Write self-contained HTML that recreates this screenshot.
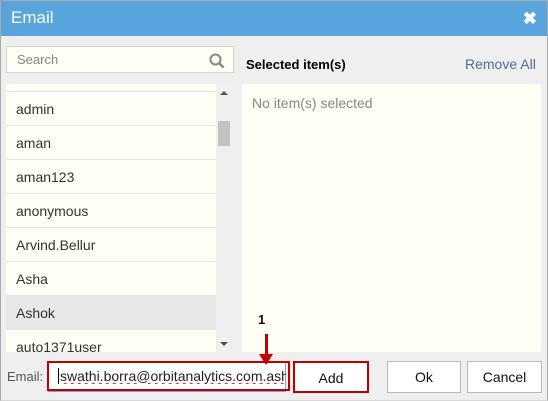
<!DOCTYPE html>
<html><head><style>
*{box-sizing:border-box;margin:0;padding:0}
body{width:548px;height:401px;overflow:hidden;background:#fff;font-family:"Liberation Sans",sans-serif;position:relative}
.dlg{position:absolute;left:0;top:0;width:548px;height:401px;background:#efefef}
.frame{position:absolute;left:0;top:0;width:548px;height:401px;border:1px solid #a9a9a9;border-bottom-color:#d8d8d8}
.title{position:absolute;left:0;top:0;width:548px;height:36px;background:#58a4dc;color:#fff;font-size:17px;padding:8px 0 0 11px}
.x{position:absolute;right:11px;top:9px;font-size:17px;font-weight:bold}
.search{position:absolute;left:6px;top:46px;width:228px;height:27px;background:#fffff5;border:1px solid #d4d4d4;color:#888;font-size:13px;padding:5px 0 0 10px}
.list{position:absolute;left:6px;top:84px;width:226px;height:268px;background:#fffff5;overflow:hidden}
.row{position:absolute;left:0;width:210px;height:34px;border-top:1px solid #e6e6e6;font-size:14px;color:#333;padding:9px 0 0 10px}
.sb{position:absolute;left:216px;top:84px;width:16px;height:268px;background:#f0f0f0}
.right{position:absolute;left:242px;top:84px;width:299px;height:268px;background:#fffff5;color:#888;font-size:14px;padding:11px 0 0 10px}
.btn{position:absolute;top:361px;height:32px;background:#fff;border:1px solid #bbb;font-size:14px;color:#111;text-align:center;line-height:30px}
</style></head><body>
<div class="dlg">
<div class="title">Email<span class="x">✖</span></div>
<div class="search">Search
<svg style="position:absolute;right:8px;top:6px" width="16" height="16" viewBox="0 0 16 16"><circle cx="6.5" cy="6.5" r="5" fill="none" stroke="#888" stroke-width="2"/><path d="M10 10l4.5 4.5" stroke="#888" stroke-width="2.5"/></svg></div>
<div class="list">
<div class="row" style="top:7px">admin</div>
<div class="row" style="top:41px">aman</div>
<div class="row" style="top:75px">aman123</div>
<div class="row" style="top:109px">anonymous</div>
<div class="row" style="top:143px">Arvind.Bellur</div>
<div class="row" style="top:177px">Asha</div>
<div class="row" style="top:211px;background:#e8e8e8">Ashok</div>
<div class="row" style="top:245px">auto1371user</div>
</div>
<div class="sb"><div style="position:absolute;left:4px;top:7px;border:4px solid transparent;border-bottom:4px solid #555;border-top:0"></div>
<div style="position:absolute;left:2px;top:37px;width:12px;height:25px;background:#c2c2c2"></div>
<div style="position:absolute;left:4px;top:258px;border:4px solid transparent;border-top:4px solid #555;border-bottom:0"></div></div>
<div style="position:absolute;left:246px;top:57px;font-size:13px;font-weight:bold;color:#000">Selected item(s)</div>
<div style="position:absolute;left:465px;top:56px;font-size:14px;color:#4a6f9e">Remove All</div>
<div class="right">No item(s) selected</div>
<div style="position:absolute;left:7px;top:369px;font-size:13px;color:#555">Email:</div>
<div style="position:absolute;left:48px;top:362px;width:238px;height:30px;background:#fff;border:1px solid #7aa7d6"></div>
<div style="position:absolute;left:47px;top:361px;width:243px;height:30px;border:2px solid #c00000"></div>
<div style="position:absolute;left:58px;top:368px;width:228px;overflow:hidden;white-space:nowrap;font-size:14px;color:#222;text-decoration:underline wavy #d33;border-left:1px solid #000;padding-left:1px">swathi.borra@orbitanalytics.com.ashok</div>
<div style="position:absolute;left:258px;top:312px;font-size:13px;font-weight:bold;color:#111">1</div>
<div style="position:absolute;left:265px;top:334px;width:3px;height:22px;background:#c00000"></div>
<div style="position:absolute;left:259px;top:354px;border-left:7px solid transparent;border-right:7px solid transparent;border-top:11px solid #c00000"></div>
<div class="btn" style="left:293px;width:76px;border:2px solid #c00000">Add</div>
<div class="btn" style="left:387px;width:74px">Ok</div>
<div class="btn" style="left:467px;width:75px">Cancel</div>
</div>
<div class="frame"></div>
</body></html>
